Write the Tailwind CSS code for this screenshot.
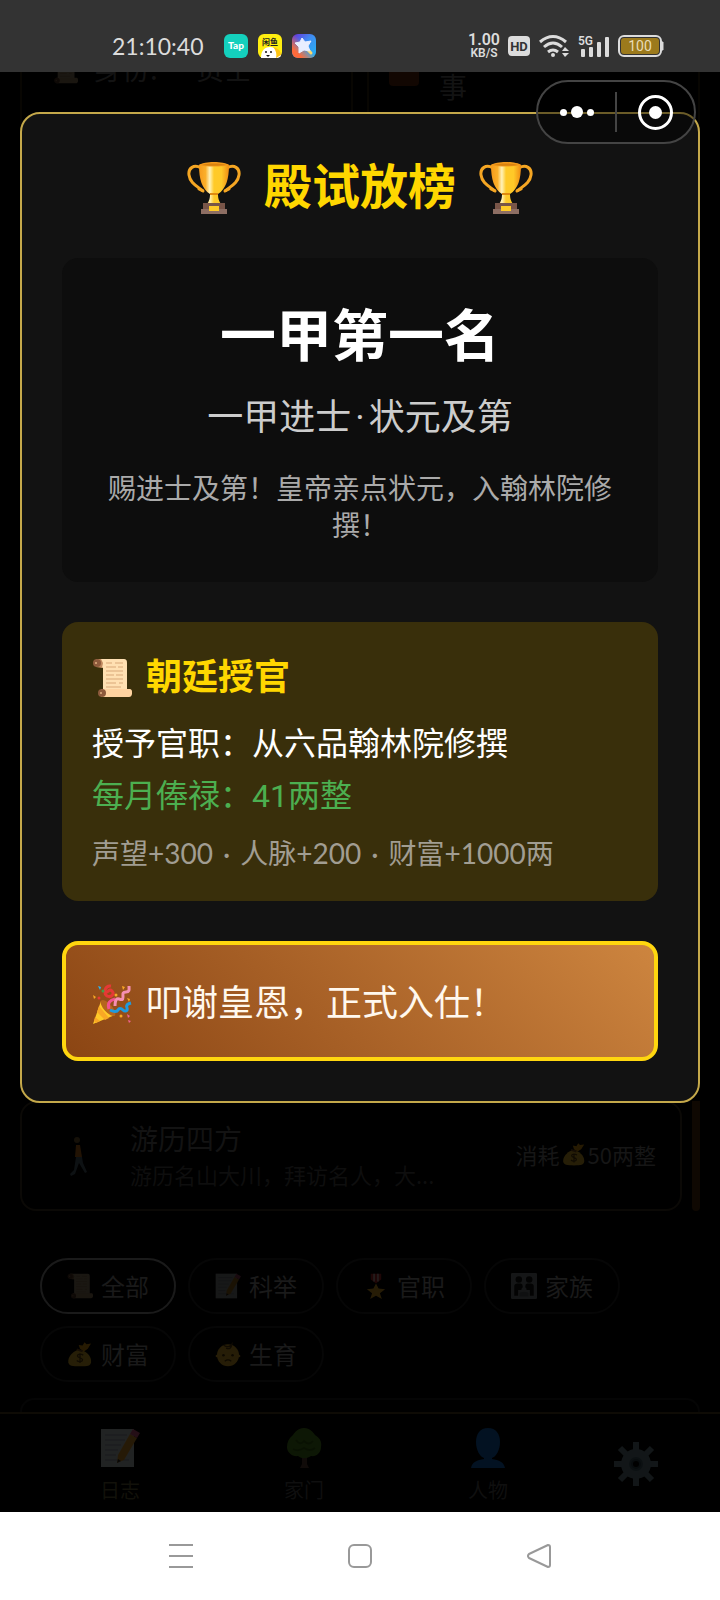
<!DOCTYPE html>
<html lang="zh-CN">
<head>
  <meta charset="utf-8">
  <title>殿试放榜</title>
  <meta name="viewport" content="width=device-width, initial-scale=1">
  <script src="https://cdn.jsdelivr.net/npm/@tailwindcss/browser@4"></script>
</head>
<body class="min-h-screen flex flex-col bg-black text-white font-['Noto_Sans_CJK_SC',sans-serif]">

  <!-- shared icons -->
  <svg class="absolute size-0" aria-hidden="true">
    <defs>
      <linearGradient id="gold" x1="0" x2="1">
        <stop offset="0" stop-color="#f59a1b"/><stop offset=".22" stop-color="#fbb02a"/>
        <stop offset=".36" stop-color="#fff2b8"/><stop offset=".5" stop-color="#ffca28"/>
        <stop offset=".75" stop-color="#ffc928"/><stop offset="1" stop-color="#f08c14"/>
      </linearGradient>
      <linearGradient id="star-bg" x1="0" y1="0" x2="1" y2="1">
        <stop offset="0" stop-color="#6a2bd9"/><stop offset=".45" stop-color="#3f8cf0"/><stop offset="1" stop-color="#23b7f5"/>
      </linearGradient>
      <linearGradient id="star-warm" x1="1" y1="0" x2="0" y2="1">
        <stop offset=".45" stop-color="#ff7a2e" stop-opacity="0"/><stop offset=".8" stop-color="#ff6a3a"/>
      </linearGradient>
    </defs>
    <symbol id="trophy" viewBox="0 0 54 54">
      <path d="M14 7C7 3 1 7 2 14c1 8 8 11 14 16M40 7c7-4 13 0 12 7-1 8-8 11-14 16" fill="none" stroke="#f5a623" stroke-width="3"/>
      <path d="M12 28l4 2M42 28l-4 2" stroke="#f5a623" stroke-width="3" stroke-linecap="round"/>
      <path d="M12 4c5-3 25-3 30 0 0 14-3 24-11 29 0 5 1 7 3 10H20c2-3 3-5 3-10C15 28 12 18 12 4z" fill="url(#gold)"/>
      <path d="M12 4c5-4 25-4 30 0-6 2-24 2-30 0z" fill="#f39a1c"/>
      <path d="M15 4c5-2 19-2 24 0-5 1-19 1-24 0z" fill="#d9820f"/>
      <path d="M23 33h8" stroke="#e08a10" stroke-width="2"/>
      <path d="M16 42h22v7H16z" fill="#795548"/>
      <path d="M14 48h26v5H14z" fill="#8d6e63"/>
      <path d="M22 45h10v5H22z" fill="#ffca28"/>
    </symbol>
    <symbol id="scroll" viewBox="0 0 40 40">
      <path d="M5 1h27c2 0 3 1 3 4v27H11V10L5 7z" fill="#ffe0b2"/>
      <path d="M9 31h29c3 0 3 8-1 8H9z" fill="#ffd3a0"/>
      <path d="M4 1h5l2 4-1 5-6-1z" fill="#c08a60"/>
      <circle cx="5" cy="5" r="4" fill="#8d5a3c"/><circle cx="4" cy="5" r="1" fill="#e0b080"/>
      <circle cx="10" cy="35" r="4" fill="#8d5a3c"/><circle cx="9" cy="35" r="1" fill="#e0b080"/>
      <path d="M14 5h6m3 0h8M14 9h10m2 0h5M14 13h17M14 17h8m2 0h7M14 21h17M14 25h10m3 0h4M14 29h15" stroke="#d9a878" stroke-width="1"/>
    </symbol>
    <symbol id="party" viewBox="0 0 40 40">
      <path d="M9 17C15 18 22 25 23 31L1 40z" fill="#ffca28"/>
      <path d="M7 22l10 12-4 2-8-8zM3 33l5 4-4 2-2-2z" fill="#f9a825"/>
      <ellipse cx="16" cy="24" rx="4" ry="10" transform="rotate(-42 16 24)" fill="#b5651d"/>
      <path d="M17 25c-2-6 1-9 6-10" fill="none" stroke="#f2528d" stroke-width="3"/>
      <path d="M19 2c-6-1-8 7-4 10 4 2 8-2 5-5-2-2-5 0-4 2" fill="none" stroke="#e53935" stroke-width="3"/>
      <path d="M23 22c0-5 1-8 4-7s4 1 4-2-1-5 3-5 3-3 3-6" fill="none" stroke="#f48fb1" stroke-width="3"/>
      <path d="M18 26c4 2 7 2 8 0s3-2 5 0 5 1 4-2 0-4 4-5" fill="none" stroke="#1e9be0" stroke-width="3"/>
      <path d="M1 11l3 2-2 2zM30 2l3 1-2 3zM35 14l3 1-1 3z" fill="#f9a825"/>
      <path d="M6 2l3 1-1 3z" fill="#29b6f6"/>
      <circle cx="7" cy="14" r="1.500" fill="#e53935"/><circle cx="11" cy="7" r="1.500" fill="#43a047"/>
      <circle cx="24" cy="11" r="1.500" fill="#f9a825"/><circle cx="29" cy="32" r="1.500" fill="#f9a825"/>
      <path d="M35 30l3 2-2 2zM36 36l3 1-2 2z" fill="#f06292"/>
    </symbol>
    <symbol id="memo" viewBox="0 0 40 40">
      <path d="M1 1h33v38H1z" fill="#dfe6ea"/>
      <path d="M5 7h22M5 12h20M5 17h16M5 22h13M5 27h11M5 32h24" stroke="#9fb0bc" stroke-width="1"/>
      <path d="M30 6l7 4-13 22-7 3 1-8z" fill="#ffb02e"/>
      <path d="M30 6l3-5 7 4-3 5z" fill="#f06292"/>
      <path d="M17 35l1-4 3 2z" fill="#333"/>
    </symbol>
    <symbol id="bag" viewBox="0 0 40 40">
      <path d="M22 14c10 3 16 11 15 19-1 5-5 6-17 6S3 38 2 33c-1-8 6-16 14-19z" fill="#fdc830"/>
      <path d="M20 12l-2-6 6 1 3-5 3 3 7-1-5 8-6 4z" fill="#fdb010"/>
      <path d="M15 13l9 3" stroke="#8d5a1c" stroke-width="3"/>
      <path d="M25 22c-3-3-9-2-9 1s8 3 8 6-6 4-9 1m5-11v15" fill="none" stroke="#6b4a10" stroke-width="2"/>
    </symbol>
    <symbol id="medal" viewBox="0 0 40 40">
      <path d="M12 1h16v9l-8 6-8-6z" fill="#c62828"/><path d="M16 1h2v12h-2zM22 1h2v12h-2z" fill="#eee"/>
      <path d="M20 16l4 8 10 1-8 6 3 9-9-5-9 5 3-9-8-6 10-1z" fill="#fdb92c"/>
    </symbol>
    <symbol id="family" viewBox="0 0 40 40">
      <rect width="40" height="40" rx="2" fill="#cfd8dc"/>
      <g fill="#222"><circle cx="12" cy="10" r="5"/><circle cx="28" cy="10" r="5"/>
      <path d="M5 35V20q0-4 5-4h5q3 0 3 4v4h4v-4q0-4 3-4h5q5 0 5 4v15h-6v-9H11v9z"/></g>
      <circle cx="20" cy="26" r="4" fill="#cfd8dc"/><path d="M13 36v-4q0-3 7-3t7 3v4z" fill="#90a0a8"/>
    </symbol>
    <symbol id="baby" viewBox="0 0 40 40">
      <circle cx="20" cy="22" r="17" fill="#fdc02f"/><circle cx="3" cy="23" r="2" fill="#fdc02f"/><circle cx="37" cy="23" r="2" fill="#fdc02f"/>
      <path d="M13 6q8 6 13-1-1 9-9 6" fill="none" stroke="#6b4a10" stroke-width="2"/>
      <circle cx="13" cy="22" r="2" fill="#5a3b08"/><circle cx="27" cy="22" r="2" fill="#5a3b08"/>
      <path d="M15 31q5-4 10 0" fill="none" stroke="#5a3b08" stroke-width="2"/>
    </symbol>
    <symbol id="walker" viewBox="0 0 20 40">
      <circle cx="7" cy="4" r="3" fill="#8a6a3a"/>
      <path d="M6 9h4l2 12H5z" fill="#e08020"/><path d="M6 21h6l1 6 4 9-2 1-6-10-4 11-4 2-1-2 4-4z" fill="#5a7080"/>
    </symbol>
    <symbol id="tree" viewBox="0 0 40 40">
      <path d="M18 24h5v12l2 4h-9l2-4z" fill="#6d4c41"/>
      <path d="M20 0c6 0 9 4 11 7 5 3 7 7 6 12 0 6-5 10-10 9-5 3-9 3-13 0-5 1-11-3-11-9 0-5 2-9 6-12 2-3 5-7 11-7z" fill="#5b9a22"/>
      <path d="M12 12q4 6 8 1 5 5 9 0M9 21q5 3 11-1 6 4 11 0" fill="none" stroke="#3f7614" stroke-width="2"/>
    </symbol>
    <symbol id="person" viewBox="0 0 40 40">
      <path d="M20 0c8 0 12 6 12 14s-4 15-8 16v1c7 1 12 3 13 9H3c1-6 6-8 13-9v-1C12 29 8 22 8 14S12 0 20 0z" fill="#0f5aa8"/>
    </symbol>
    <symbol id="gear" viewBox="0 0 44 44">
      <g stroke="#7896a0" stroke-width="6"><path d="M22 0v44M0 22h44M6 6l32 32M38 6L6 38"/></g>
      <circle cx="22" cy="22" r="11" fill="#4f6f7c" stroke="#7896a0" stroke-width="8"/>
      <circle cx="22" cy="22" r="4" fill="#000" stroke="#36505c" stroke-width="2"/>
    </symbol>
  </svg>

  <header class="h-[72px] shrink-0 bg-[#333] text-[#dcdcdc] flex items-center justify-between pt-5 pl-[112px] pr-14">
    <div class="flex items-center gap-[10px]">
      <time class="font-[Lato,sans-serif] text-[23px] leading-6 w-[102px]">21:10:40</time>
      <svg class="w-6 h-6" viewBox="0 0 24 24">
        <rect width="24" height="24" rx="6" fill="#14d0bd"/>
        <text x="12" y="15" text-anchor="middle" font-family="Lato" font-weight="900" font-size="10" fill="#fff">Tap</text>
      </svg>
      <svg class="w-6 h-6" viewBox="0 0 24 24">
        <rect width="24" height="24" rx="6" fill="#ffee10"/>
        <text x="12" y="11" text-anchor="middle" font-family="Noto Sans CJK SC" font-weight="700" font-size="8" fill="#222">闲鱼</text>
        <path d="M3 24c0-7 3-11 9-11s10 4 11 9c-2 2-4 2-6 2z" fill="#fff"/>
        <path d="M15 13c5 1 8 4 8 8l-5 3c1-4 0-8-3-11z" fill="#ffc413"/>
        <circle cx="8" cy="18" r="1" fill="#111"/><circle cx="13" cy="18" r="1" fill="#111"/><path d="M8 21h4l-2 2z" fill="#111"/>
      </svg>
      <svg class="w-6 h-6" viewBox="0 0 24 24">
        <rect width="24" height="24" rx="6" fill="url(#star-bg)"/><rect width="24" height="24" rx="6" fill="url(#star-warm)"/>
        <path d="M15 15l4 4" stroke="#ffd86b" stroke-width="3" stroke-linecap="round"/>
        <path d="M10 4l3 4 6-1-3 5 2 5-6-1-5 3v-6L3 9l5-1z" fill="#e8eeff" stroke="#e8eeff" stroke-linejoin="round"/>
      </svg>
    </div>
    <div class="flex items-center gap-2">
      <div class="font-[Roboto,sans-serif] font-semibold text-center">
        <div class="text-base leading-[14px]">1.00</div>
        <div class="text-xs leading-3">KB/S</div>
      </div>
      <svg class="w-[22px] h-5" viewBox="0 0 22 20">
        <rect width="22" height="20" rx="4" fill="#dcdcdc"/>
        <text x="11" y="15" text-anchor="middle" font-family="Roboto" font-weight="700" font-size="13" fill="#333">HD</text>
      </svg>
      <svg class="w-[32px] h-6" viewBox="0 0 32 24" fill="none" stroke="#dcdcdc" stroke-width="3">
        <path d="M2 8q13-11 26 0M6 13q9-8 18 0M10 18q5-4 10 0"/>
        <circle cx="15" cy="21" r="2" fill="#dcdcdc" stroke="none"/>
        <path d="M24 17l3-4 4 4zM24 19l3 4 4-4z" fill="#dcdcdc" stroke="none"/>
      </svg>
      <svg class="w-8 h-6" viewBox="0 0 32 24" fill="#dcdcdc">
        <text x="0" y="11" font-family="Roboto" font-weight="600" font-size="12">5G</text>
        <rect x="3" y="15" width="4" height="8" rx="1"/><rect x="11" y="13" width="4" height="10" rx="1"/>
        <rect x="19" y="8" width="4" height="15" rx="1"/><rect x="27" y="3" width="4" height="20" rx="1"/>
      </svg>
      <svg class="w-[46px] h-[22px]" viewBox="0 0 46 22">
        <rect x="1" y="1" width="42" height="20" rx="5" fill="none" stroke="#dcdcdc" stroke-width="2"/>
        <rect x="3" y="3" width="38" height="16" rx="3" fill="#9c7a1c"/>
        <path d="M44 7h1v8h-1z" fill="#dcdcdc" stroke="#dcdcdc"/>
        <text x="22" y="16" text-anchor="middle" font-family="Roboto" font-size="14" fill="#e8dcb8">100</text>
      </svg>
    </div>
  </header>

  <main class="relative flex-1 flex flex-col overflow-hidden">
    <!-- page under the mask -->
    <section class="grid grid-cols-2 gap-[14px] px-5 text-[28px] leading-9 text-[#131313]">
      <div class="h-16 border-x-2 border-[#080602] pl-7 flex items-start gap-4 overflow-hidden">
        <svg class="w-7 h-7 -mt-4 opacity-10"><use href="#scroll"/></svg>
        <p class="-mt-[22px]">身份: <span class="ml-8">贡士</span></p>
      </div>
      <div class="h-16 border-x-2 border-[#080602] pl-5 flex items-start overflow-hidden">
        <span class="w-[30px] h-[14px] mr-5 rounded-b-sm bg-[#120702]"></span>
        <p class="-mt-1">事</p>
      </div>
    </section>

    <section class="mt-auto flex gap-[10px] px-5">
      <button type="button" class="flex-1 min-w-0 h-[110px] border-2 border-[#0b0906] rounded-2xl pl-12 pr-6 flex items-center text-left">
        <svg class="w-5 h-10 mr-10 opacity-15"><use href="#walker"/></svg>
        <span class="flex-1 min-w-0">
          <span class="block text-[28px] leading-9 text-[#131313]">游历四方</span>
          <span class="block text-[22px] leading-9 text-[#0e0e0e]">游历名山大川，拜访名人，大...</span>
        </span>
        <span class="pb-1 flex items-center gap-[2px] text-[22px] text-[#161616]">消耗<svg class="w-6 h-6 opacity-15"><use href="#bag"/></svg>50两整</span>
      </button>
      <div class="w-2 rounded-b bg-[#0f0802]"></div>
    </section>

    <nav class="mt-[47px] px-10 flex flex-wrap gap-3 text-2xl text-[#1a1a1a]">
      <button type="button" class="w-[136px] h-14 rounded-full border-2 border-[#1a1a1a] flex items-center justify-center gap-2">
        <svg class="w-[26px] h-[26px] opacity-10"><use href="#scroll"/></svg>全部</button>
      <button type="button" class="w-[136px] h-14 rounded-full border-2 border-[#060606] flex items-center justify-center gap-2">
        <svg class="w-[26px] h-[26px] opacity-10"><use href="#memo"/></svg>科举</button>
      <button type="button" class="w-[136px] h-14 rounded-full border-2 border-[#060606] flex items-center justify-center gap-2">
        <svg class="w-[26px] h-[26px] opacity-15"><use href="#medal"/></svg>官职</button>
      <button type="button" class="w-[136px] h-14 rounded-full border-2 border-[#060606] flex items-center justify-center gap-2">
        <svg class="w-[26px] h-[26px] opacity-10"><use href="#family"/></svg>家族</button>
      <button type="button" class="w-[136px] h-14 rounded-full border-2 border-[#060606] flex items-center justify-center gap-2">
        <svg class="w-[26px] h-[26px] opacity-15"><use href="#bag"/></svg>财富</button>
      <button type="button" class="w-[136px] h-14 rounded-full border-2 border-[#060606] flex items-center justify-center gap-2">
        <svg class="w-[26px] h-[26px] opacity-15"><use href="#baby"/></svg>生育</button>
    </nav>
    <div class="mt-4 mx-5 h-[14px] rounded-t-2xl border-2 border-b-0 border-[#050505]"></div>

    <!-- result dialog -->
    <div role="dialog" aria-labelledby="title" class="absolute inset-x-5 top-10 rounded-[20px] border-2 border-[#c4a84a] bg-[#121212] p-10 font-[Roboto,'Noto_Sans_CJK_SC',sans-serif]">
      <h1 id="title" class="flex items-center justify-center gap-[23px] text-5xl leading-[68px] font-bold text-[#ffd700]">
        <svg class="w-[54px] h-[54px]"><use href="#trophy"/></svg>
        殿试放榜
        <svg class="w-[54px] h-[54px]"><use href="#trophy"/></svg>
      </h1>

      <section class="mt-9 rounded-2xl bg-[#0d0d0d] px-10 pt-[42px] pb-[37px] text-center">
        <h2 class="text-[56px] leading-[74px] font-bold">一甲第一名</h2>
        <p class="mt-5 text-4xl leading-[48px] text-[#ccc]">一甲进士<span class="mx-1">·</span>状元及第</p>
        <p class="mt-[29px] text-[28px] leading-[37px] text-[#aaa]">赐进士及第！皇帝亲点状元，入翰林院修撰！</p>
      </section>

      <section class="mt-10 rounded-2xl bg-[#392f0b] px-[30px] pt-8 pb-[29px]">
        <h3 class="flex items-center gap-[14px] text-4xl leading-[48px] font-bold text-[#ffd700]">
          <svg class="w-10 h-10"><use href="#scroll"/></svg>朝廷授官
        </h3>
        <p class="mt-4 text-[32px] leading-[52px]">授予官职：从六品翰林院修撰</p>
        <p class="text-[32px] leading-[52px] text-[#4caf50]">每月俸禄：41两整</p>
        <p class="mt-3 flex gap-[10px] font-[Lato,'Noto_Sans_CJK_SC',sans-serif] text-[28px] leading-[38px] text-[#a19d92]">
          <span>声望+300</span><span>·</span><span>人脉+200</span><span>·</span><span>财富+1000两</span>
        </p>
      </section>

      <button type="button" class="mt-10 w-full h-[120px] rounded-2xl border-4 border-[#ffd60f] bg-linear-45 from-[#8b4513] to-[#cd853f] px-[26px] pt-[6px] flex items-center gap-[14px] text-4xl text-[#fff8ee]">
        <svg class="w-10 h-10"><use href="#party"/></svg>叩谢皇恩，正式入仕！
      </button>
    </div>

    <!-- mini program capsule -->
    <div class="absolute top-2 right-6 w-40 h-16 rounded-full border-2 border-[#444] bg-black/45 flex items-center">
      <button type="button" aria-label="更多" class="flex-1 flex items-center justify-center gap-1">
        <span class="size-[7px] rounded-full bg-white"></span>
        <span class="size-3 rounded-full bg-white"></span>
        <span class="size-[7px] rounded-full bg-white"></span>
      </button>
      <span class="w-[2px] h-10 bg-[#444]"></span>
      <button type="button" aria-label="关闭" class="flex-1 flex justify-center">
        <span class="size-[35px] rounded-full border-3 border-white flex items-center justify-center"><span class="size-[13px] rounded-full bg-white"></span></span>
      </button>
    </div>
  </main>

  <nav class="h-[100px] shrink-0 border-t-2 border-[#0e0b05] px-7 pt-[6px] flex items-center text-xl leading-7 text-[#0f0f0f]">
    <a href="#" class="flex-1 flex flex-col items-center gap-2 text-[#12110a]"><svg class="w-10 h-10 opacity-15"><use href="#memo"/></svg>日志</a>
    <a href="#" class="flex-1 flex flex-col items-center gap-2"><svg class="w-10 h-10 opacity-15"><use href="#tree"/></svg>家门</a>
    <a href="#" class="flex-1 flex flex-col items-center gap-2"><svg class="w-10 h-10 opacity-20"><use href="#person"/></svg>人物</a>
    <a href="#" aria-label="设置" class="w-28 pb-1 flex justify-center"><svg class="w-11 h-11 opacity-15"><use href="#gear"/></svg></a>
  </nav>

  <footer class="h-[88px] shrink-0 bg-white px-[92px] flex items-center">
    <button type="button" aria-label="任务" class="flex-1 flex justify-center">
      <svg class="w-6 h-6" viewBox="0 0 24 24" stroke="#999" stroke-width="2"><path d="M0 1h24M0 12h24M0 23h24"/></svg>
    </button>
    <button type="button" aria-label="主页" class="flex-1 flex justify-center">
      <svg class="w-6 h-6" viewBox="0 0 24 24" stroke="#999" stroke-width="2" fill="none"><rect x="1" y="1" width="22" height="22" rx="5"/></svg>
    </button>
    <button type="button" aria-label="返回" class="flex-1 flex justify-center">
      <svg class="w-6 h-6" viewBox="0 0 24 24" stroke="#999" stroke-width="2" fill="none" stroke-linejoin="round"><path d="M21 1L2 10q-2 2 0 4l19 9q2 0 2-2V3q0-2-2-2z"/></svg>
    </button>
  </footer>
</body>
</html>
